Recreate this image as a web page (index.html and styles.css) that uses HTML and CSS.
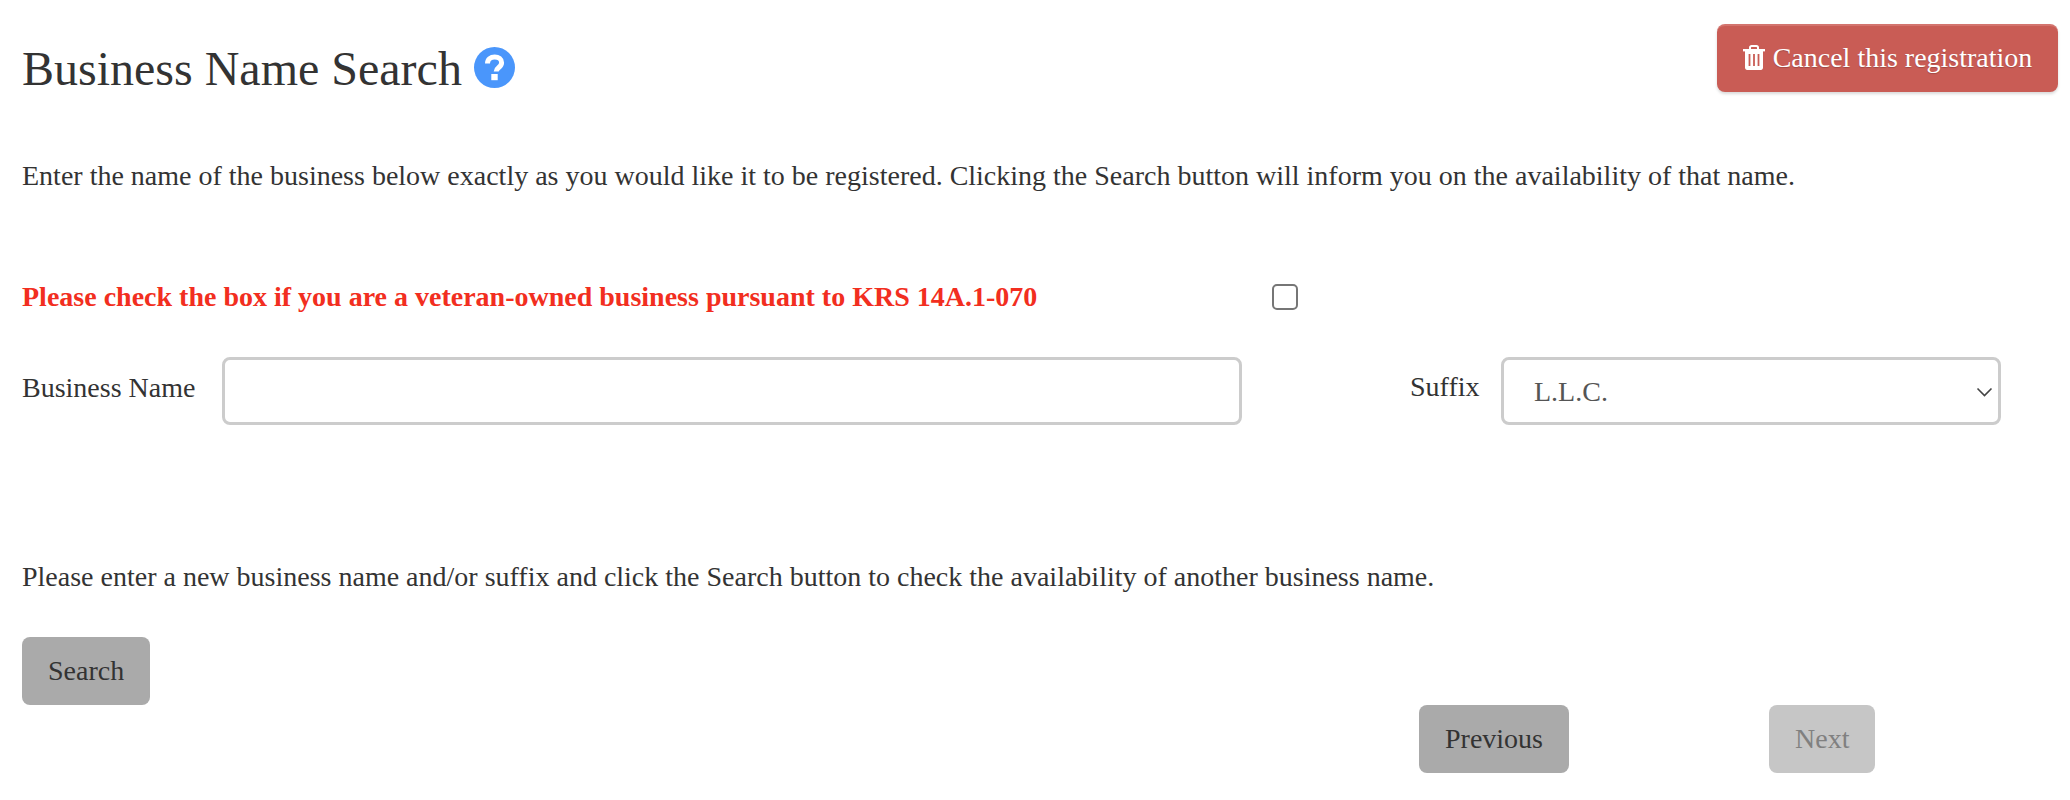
FILE: index.html
```html
<!DOCTYPE html>
<html lang="en">
<head>
    <meta charset="UTF-8">
    <title>Business Name Search</title>
    <link rel="stylesheet" href="styles.css">
</head>
<body>
    <div class="container">
        <div class="page-header">
            <h1 class="page-title">
                Business Name Search
                <svg class="help-icon" viewBox="0 0 41 41">
                    <circle cx="20.5" cy="20.5" r="20.5" fill="#4a96fb"/>
                    <path d="M13.500 16.500c0-4.200 3.200-6.500 7.200-6.500 3.900 0 6.900 2.200 6.900 5.700 0 4.800-5.400 4.700-5.400 8.800" fill="none" stroke="#fff" stroke-width="5"/>
                    <rect x="17.300" y="27" width="6.400" height="6.200" fill="#fff"/>
                </svg>
            </h1>
            <button class="btn-cancel">
                <svg class="trash-icon" viewBox="0 0 22 25">
                    <path d="M7 4.500V2.600C7 1.600 7.700 1 8.600 1h4.800c.9 0 1.600.6 1.600 1.600v1.900" fill="none" stroke="#fff" stroke-width="2"/>
                    <rect x="0" y="4" width="22" height="2.400" fill="#fff"/>
                    <path d="M2 6h18v16.600c0 1.300-.9 2.400-2.100 2.400H4.100C2.900 25 2 23.900 2 22.600z" fill="#fff"/>
                    <path d="M6.500 9v12M11 9v12M15.500 9v12" stroke="#c95c55" stroke-width="1.800"/>
                </svg>
                Cancel this registration
            </button>
        </div>

        <p class="intro">Enter the name of the business below exactly as you would like it to be registered. Clicking the Search button will inform you on the availability of that name.</p>

        <div class="veteran-row">
            <label class="veteran-label" for="veteran">Please check the box if you are a veteran-owned business pursuant to KRS 14A.1-070</label>
            <input class="veteran-check" type="checkbox" id="veteran">
        </div>

        <div class="name-row">
            <label class="field-label" for="businessName">Business Name</label>
            <input class="field-input name-input" type="text" id="businessName">
            <label class="field-label suffix-label" for="suffix">Suffix</label>
            <div class="select-wrap">
                <select class="field-input suffix-select" id="suffix">
                    <option>L.L.C.</option>
                </select>
                <svg class="select-arrow" viewBox="0 0 16 10">
                    <path d="M1 1.500l7 7 7-7" fill="none" stroke="#444" stroke-width="1.600"/>
                </svg>
            </div>
        </div>

        <p class="hint">Please enter a new business name and/or suffix and click the Search button to check the availability of another business name.</p>

        <button class="btn">Search</button>

        <div class="nav-row">
            <button class="btn">Previous</button>
            <button class="btn btn-disabled" disabled>Next</button>
        </div>
    </div>
</body>
</html>
```

FILE: styles.css
```css
* {
    margin: 0;
    padding: 0;
    box-sizing: border-box;
}

body {
    font-family: "Liberation Serif", "Times New Roman", serif;
    font-size: 28px;
    color: #333;
    background: #fff;
}

.container {
    padding: 24px 12px 0 22px;
}

.page-header {
    display: flex;
    justify-content: space-between;
    align-items: flex-start;
    height: 136px;
}

.page-title {
    display: flex;
    align-items: center;
    gap: 12px;
    font-size: 48px;
    font-weight: 400;
    line-height: 56px;
    margin-top: 17px;
    color: #333;
}

.help-icon {
    width: 41px;
    height: 41px;
    margin-top: -3px;
}

.btn-cancel {
    display: flex;
    align-items: center;
    justify-content: center;
    gap: 8px;
    width: 341px;
    height: 68px;
    padding-bottom: 3px;
    font-family: inherit;
    font-size: 28px;
    color: #fff;
    background: #c95c55;
    border: none;
    border-top: 2px solid #d3746e;
    border-radius: 8px;
    box-shadow: 0 2px 3px rgba(0, 0, 0, 0.15);
    text-shadow: 0 1px 1px rgba(0, 0, 0, 0.2);
}

.trash-icon {
    width: 22px;
    height: 25px;
}

.intro,
.hint {
    line-height: 32px;
    color: #333;
}

.veteran-row {
    display: flex;
    align-items: center;
    height: 26px;
    margin-top: 92px;
}

.veteran-label {
    width: 1250px;
    font-weight: 700;
    color: #f22e20;
}

.veteran-check {
    appearance: none;
    width: 26px;
    height: 26px;
    background: #fff;
    border: 2px solid #767676;
    border-radius: 5px;
}

.name-row {
    display: flex;
    align-items: center;
    margin-top: 47px;
}

.field-label {
    width: 200px;
    color: #333;
    margin-top: -6px;
}

.field-input {
    height: 68px;
    font-family: inherit;
    font-size: 28px;
    color: #555;
    background: #fff;
    border: 3px solid #ccc;
    border-radius: 8px;
    outline: none;
}

.name-input {
    width: 1020px;
}

.suffix-label {
    width: 91px;
    margin-left: 168px;
    margin-top: -8px;
}

.select-wrap {
    position: relative;
    width: 500px;
}

.suffix-select {
    appearance: none;
    width: 100%;
    padding-left: 30px;
}

.select-arrow {
    position: absolute;
    top: 30px;
    right: 8px;
    width: 17px;
    height: 10px;
}

.hint {
    margin-top: 136px;
}

.btn {
    display: block;
    height: 68px;
    padding: 0 26px;
    font-family: inherit;
    font-size: 28px;
    color: #333;
    background: #aaa;
    border: none;
    border-radius: 8px;
}

.hint + .btn {
    margin-top: 44px;
}

.nav-row {
    display: flex;
    gap: 200px;
    margin-left: 1397px;
}

.btn-disabled {
    background: #c6c6c6;
    color: #808080;
}
```
